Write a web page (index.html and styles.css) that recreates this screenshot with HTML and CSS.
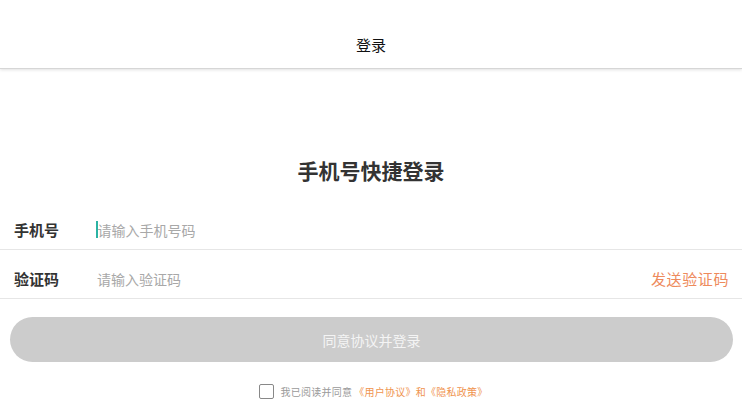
FILE: index.html
```html
<!DOCTYPE html>
<html lang="zh">
<head>
<meta charset="utf-8">
<title>登录</title>
<link rel="stylesheet" href="styles.css">
</head>
<body>
<header class="topbar"><span class="topbar-title">登录</span></header>
<main class="login">
  <h1 class="login-title">手机号快捷登录</h1>
  <div class="field">
    <span class="field-label">手机号</span>
    <span class="field-input"><span class="caret"></span><span class="placeholder">请输入手机号码</span></span>
  </div>
  <div class="field">
    <span class="field-label">验证码</span>
    <span class="field-input"><span class="placeholder">请输入验证码</span></span>
    <span class="send-code">发送验证码</span>
  </div>
  <button class="submit" type="button">同意协议并登录</button>
  <div class="agree">
    <span class="checkbox"></span>
    <span class="agree-text">我已阅读并同意<span class="link">《用户协议》和《隐私政策》</span></span>
  </div>
</main>
</body>
</html>
```
FILE: styles.css
```css
* { box-sizing: border-box; }
body {
  margin: 0;
  background: #fff;
  font-family: "Noto Sans CJK SC", "Noto Sans", sans-serif;
  color: #333;
}
.topbar {
  height: 69px;
  padding-top: 32px;
  text-align: center;
  border-bottom: 1px solid #d6d6d6;
  box-shadow: 0 1px 3px rgba(0,0,0,0.12);
}
.topbar-title {
  font-size: 15px;
  line-height: 20px;
  color: #111;
}
.login-title {
  margin: 86px 0 15px;
  font-size: 21px;
  line-height: 31px;
  font-weight: 700;
  text-align: center;
  color: #333;
}
.field {
  display: flex;
  align-items: center;
  height: 49px;
  padding: 9px 13px 0 14px;
  border-bottom: 1px solid #e6e6e6;
}
.field-label {
  width: 83px;
  font-size: 15px;
  font-weight: 700;
  color: #333;
}
.field-input {
  flex: 1;
  display: flex;
  align-items: center;
  font-size: 14px;
}
.placeholder { color: #a8a8a8; }
.caret {
  width: 1.5px;
  height: 17px;
  margin-left: -1px;
  background: #2bb3a3;
}
.send-code {
  font-size: 15px;
  letter-spacing: 0.6px;
  color: #ee8a5c;
}
.submit {
  display: block;
  width: calc(100% - 19px);
  height: 45px;
  margin: 18px 9px 0 10px;
  border: 0;
  border-radius: 23px;
  background: #cccccc;
  color: #f4f4f4;
  font-family: inherit;
  font-size: 14px;
}
.agree {
  display: flex;
  justify-content: center;
  align-items: center;
  gap: 7px;
  margin-top: 22px;
  padding-left: 4px;
}
.checkbox {
  width: 15px;
  height: 15px;
  border: 1.5px solid #888;
  border-radius: 2px;
}
.agree-text {
  font-size: 10px;
  letter-spacing: 0.25px;
  color: #9a9a9a;
}
.link { color: #f0944f; margin-left: 2px; }
```
